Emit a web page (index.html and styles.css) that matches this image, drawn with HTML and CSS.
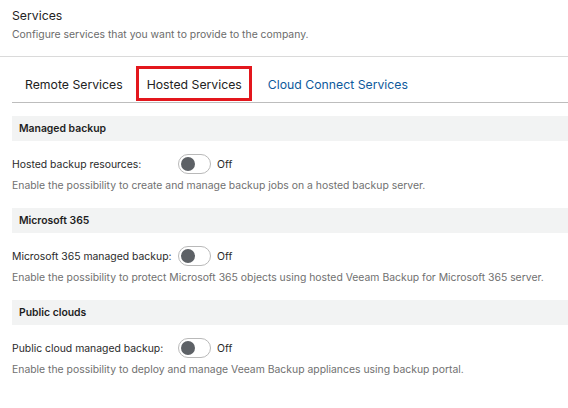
FILE: index.html
```html
<!DOCTYPE html>
<html>
<head>
<meta charset="utf-8">
<link rel="stylesheet" href="styles.css">
</head>
<body>
<div class="page">
  <div class="head">
    <div class="title">Services</div>
    <div class="subtitle">Configure services that you want to provide to the company.</div>
  </div>
  <div class="tabs">
    <div class="tab tab-first">Remote Services</div>
    <div class="tab tab-active">Hosted Services</div>
    <div class="tab tab-link">Cloud Connect Services</div>
  </div>
  <div class="content">
    <div class="section">
      <div class="section-head">Managed backup</div>
      <div class="row">
        <div class="label">Hosted backup resources:</div>
        <div class="toggle"><span class="knob"></span></div>
        <div class="state">Off</div>
      </div>
      <div class="desc">Enable the possibility to create and manage backup jobs on a hosted backup server.</div>
    </div>
    <div class="section">
      <div class="section-head">Microsoft 365</div>
      <div class="row">
        <div class="label">Microsoft 365 managed backup:</div>
        <div class="toggle"><span class="knob"></span></div>
        <div class="state">Off</div>
      </div>
      <div class="desc">Enable the possibility to protect Microsoft 365 objects using hosted Veeam Backup for Microsoft 365 server.</div>
    </div>
    <div class="section">
      <div class="section-head">Public clouds</div>
      <div class="row">
        <div class="label">Public cloud managed backup:</div>
        <div class="toggle"><span class="knob"></span></div>
        <div class="state">Off</div>
      </div>
      <div class="desc">Enable the possibility to deploy and manage Veeam Backup appliances using backup portal.</div>
    </div>
  </div>
</div>
</body>
</html>
```
FILE: styles.css
```css
* { box-sizing: border-box; }
html, body { margin: 0; padding: 0; background: #fff; }
body {
  font-family: Inter, "Noto Sans", sans-serif;
  color: #262626;
  width: 568px;
  height: 408px;
  overflow: hidden;
}
.head {
  padding: 7px 12px 0 12px;
  height: 57px;
  border-bottom: 1px solid #dadada;
}
.title {
  font-size: 12.25px;
  line-height: 18px;
  color: #232323;
}
.subtitle {
  margin-top: 3px;
  font-size: 10.4px;
  line-height: 14px;
  color: #6b6b6b;
}
.tabs {
  display: flex;
  margin: 9px 0 0 12px;
  height: 37px;
  border-bottom: 1px solid #bdbdbd;
}
.tab {
  height: 35px;
  display: flex;
  align-items: center;
  padding-top: 2px;
  font-size: 12.25px;
  color: #222;
  white-space: nowrap;
}
.tab-first { padding-left: 13px; padding-right: 13px; }
.tab-active {
  border: 3px solid #e3171d;
  padding-left: 8px;
  padding-right: 7px;
}
.tab-link {
  color: #0e5a9c;
  padding-left: 16px;
  padding-right: 13px;
}
.content {
  padding: 13px 0 0 12px;
}
.section-head {
  height: 25px;
  background: #f2f3f3;
  padding-left: 7px;
  display: flex;
  align-items: center;
  font-size: 10.4px;
  font-weight: 600;
  color: #1e1e1e;
}
.row {
  margin-top: 13px;
  height: 20px;
  display: flex;
  align-items: center;
  font-size: 10.4px;
  color: #2a2a2a;
}
.label { width: 166px; white-space: nowrap; }
.toggle {
  width: 33px;
  height: 20px;
  border: 1px solid #b9b9b9;
  border-radius: 10px;
  background: #fff;
  display: flex;
  align-items: center;
  padding-left: 2px;
}
.knob {
  width: 14px;
  height: 14px;
  border-radius: 50%;
  background: #5d6166;
}
.state { margin-left: 6px; }
.desc {
  margin-top: 4px;
  margin-bottom: 14px;
  line-height: 16px;
  font-size: 10.4px;
  color: #707070;
  white-space: nowrap;
}
.section:nth-child(3) .section-head { margin-top: 1px; }
```
